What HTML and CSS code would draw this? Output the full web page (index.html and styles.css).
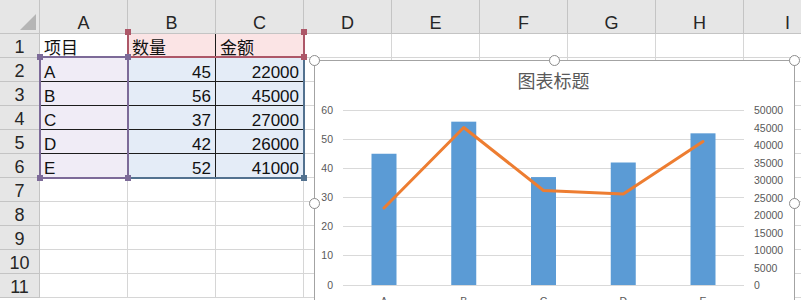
FILE: index.html
```html
<!DOCTYPE html>
<html lang="zh-CN">
<head>
    <meta charset="UTF-8">
    <meta name="viewport" content="width=device-width, initial-scale=1.0">
    <title>Sheet1 - 图表</title>
    <link rel="stylesheet" href="styles.css">
</head>
<body>

<div class="sheet">
    <div class="grid">
        <!-- column headers -->
        <div class="corner"></div>
        <div class="hd">A</div><div class="hd">B</div><div class="hd">C</div>
        <div class="hd">D</div><div class="hd">E</div><div class="hd">F</div>
        <div class="hd">G</div><div class="hd">H</div><div class="hd">I</div>

        <div class="rh">1</div>
        <div class="c t">项目</div><div class="c t nm">数量</div><div class="c t nm">金额</div>
        <div class="c"></div><div class="c"></div><div class="c"></div><div class="c"></div><div class="c"></div><div class="c"></div>

        <div class="rh">2</div>
        <div class="c t cat">A</div><div class="c t val num">45</div><div class="c t val num">22000</div>
        <div class="c"></div><div class="c"></div><div class="c"></div><div class="c"></div><div class="c"></div><div class="c"></div>

        <div class="rh">3</div>
        <div class="c t cat">B</div><div class="c t val num">56</div><div class="c t val num">45000</div>
        <div class="c"></div><div class="c"></div><div class="c"></div><div class="c"></div><div class="c"></div><div class="c"></div>

        <div class="rh">4</div>
        <div class="c t cat">C</div><div class="c t val num">37</div><div class="c t val num">27000</div>
        <div class="c"></div><div class="c"></div><div class="c"></div><div class="c"></div><div class="c"></div><div class="c"></div>

        <div class="rh">5</div>
        <div class="c t cat">D</div><div class="c t val num">42</div><div class="c t val num">26000</div>
        <div class="c"></div><div class="c"></div><div class="c"></div><div class="c"></div><div class="c"></div><div class="c"></div>

        <div class="rh">6</div>
        <div class="c t cat">E</div><div class="c t val num">52</div><div class="c t val num">41000</div>
        <div class="c"></div><div class="c"></div><div class="c"></div><div class="c"></div><div class="c"></div><div class="c"></div>

        <div class="rh">7</div>
        <div class="c"></div><div class="c"></div><div class="c"></div><div class="c"></div><div class="c"></div><div class="c"></div><div class="c"></div><div class="c"></div><div class="c"></div>
        <div class="rh">8</div>
        <div class="c"></div><div class="c"></div><div class="c"></div><div class="c"></div><div class="c"></div><div class="c"></div><div class="c"></div><div class="c"></div><div class="c"></div>
        <div class="rh">9</div>
        <div class="c"></div><div class="c"></div><div class="c"></div><div class="c"></div><div class="c"></div><div class="c"></div><div class="c"></div><div class="c"></div><div class="c"></div>
        <div class="rh">10</div>
        <div class="c"></div><div class="c"></div><div class="c"></div><div class="c"></div><div class="c"></div><div class="c"></div><div class="c"></div><div class="c"></div><div class="c"></div>
        <div class="rh">11</div>
        <div class="c"></div><div class="c"></div><div class="c"></div><div class="c"></div><div class="c"></div><div class="c"></div><div class="c"></div><div class="c"></div><div class="c"></div>
    </div>

    <!-- range finder outlines for the chart source data -->
    <div class="range range-val"><i class="tl"></i><i class="tr"></i><i class="bl"></i><i class="br"></i></div>
    <div class="range range-name"><i class="tl"></i><i class="tr"></i><i class="bl"></i><i class="br"></i></div>
    <div class="range range-cat"><i class="tl"></i><i class="tr"></i><i class="bl"></i><i class="br"></i></div>

    <!-- embedded chart -->
    <div class="chart">
        <svg class="plot" width="479" height="284" viewBox="0 0 479 284">
            <text class="title" x="238.5" y="27" text-anchor="middle">图表标题</text>

            <g class="gridlines">
                <line x1="28" y1="49.5" x2="429" y2="49.5"/>
                <line x1="28" y1="78.5" x2="429" y2="78.5"/>
                <line x1="28" y1="107.5" x2="429" y2="107.5"/>
                <line x1="28" y1="136.5" x2="429" y2="136.5"/>
                <line x1="28" y1="165.5" x2="429" y2="165.5"/>
                <line x1="28" y1="194.5" x2="429" y2="194.5"/>
                <line x1="28" y1="224.5" x2="429" y2="224.5"/>
            </g>

            <g class="axis" text-anchor="end">
                <text x="18" y="53">60</text>
                <text x="18" y="82">50</text>
                <text x="18" y="111">40</text>
                <text x="18" y="140">30</text>
                <text x="18" y="169">20</text>
                <text x="18" y="198">10</text>
                <text x="18" y="228">0</text>
            </g>

            <g class="axis">
                <text x="439" y="53">50000</text>
                <text x="439" y="70.5">45000</text>
                <text x="439" y="88">40000</text>
                <text x="439" y="105.5">35000</text>
                <text x="439" y="123">30000</text>
                <text x="439" y="140.5">25000</text>
                <text x="439" y="158">20000</text>
                <text x="439" y="175.5">15000</text>
                <text x="439" y="193">10000</text>
                <text x="439" y="210.5">5000</text>
                <text x="439" y="228">0</text>
            </g>

            <g class="bars">
                <rect x="56.5" y="92.75" width="25" height="131.25"/>
                <rect x="136.25" y="60.67" width="25" height="163.33"/>
                <rect x="216" y="116.08" width="25" height="107.92"/>
                <rect x="295.75" y="101.5" width="25" height="122.5"/>
                <rect x="375.5" y="72.33" width="25" height="151.67"/>
            </g>

            <polyline class="line" points="69,147 148.75,66.5 228.5,129.5 308.25,133 388,80.5"/>

            <g class="axis" text-anchor="middle">
                <text x="69" y="244">A</text>
                <text x="148.75" y="244">B</text>
                <text x="228.5" y="244">C</text>
                <text x="308.25" y="244">D</text>
                <text x="388" y="244">E</text>
            </g>
        </svg>
        <span class="knob k-tl"></span>
        <span class="knob k-tm"></span>
        <span class="knob k-tr"></span>
        <span class="knob k-ml"></span>
        <span class="knob k-mr"></span>
    </div>
</div>

</body>
</html>
```

FILE: styles.css
```css
body {
    margin: 0;
    background: #fff;
    font-family: "Liberation Sans", "Noto Sans CJK SC", sans-serif;
    color: #111;
    overflow: hidden;
}

.sheet {
    position: relative;
    width: 801px;
    height: 300px;
    overflow: hidden;
}

.grid {
    display: grid;
    grid-template-columns: 40px repeat(9, 88px);
    grid-template-rows: 34px repeat(11, 24px);
}

.grid > div {
    box-sizing: border-box;
    border-right: 1px solid #d6d6d6;
    border-bottom: 1px solid #d6d6d6;
    white-space: nowrap;
    overflow: hidden;
}


/* headers */
.corner,
.hd,
.rh {
    background: #e6e6e6;
    color: #262626;
    font-size: 18px;
    text-align: center;
}

.grid > .corner,
.grid > .hd,
.grid > .rh {
    border-color: #c4c4c4;
}

.corner {
    position: relative;
}

.corner::after {
    content: "";
    position: absolute;
    right: 3px;
    bottom: 3px;
    width: 16px;
    height: 16px;
    background: #b5b5b5;
    clip-path: polygon(100% 0, 100% 100%, 0 100%);
}

.hd {
    padding-top: 13px;
    line-height: 20px;
}

.rh {
    padding-top: 4px;
    line-height: 19px;
}


/* cells */
.c {
    padding: 5px 4px 0;
    font-size: 17px;
    line-height: 19px;
}

.grid > .t {
    border-right-color: #1c1c1c;
    border-bottom-color: #1c1c1c;
}

.num {
    text-align: right;
}

.cat {
    background: #f0ecf6;
}

.nm {
    background: #fbe4e5;
}

.val {
    background: #e4ecf7;
}


/* range finder */
.range {
    position: absolute;
    box-sizing: border-box;
    border: 2px solid currentColor;
}

.range i {
    position: absolute;
    width: 6px;
    height: 6px;
    background: currentColor;
}

.range .tl { left: -4px; top: -4px; }
.range .tr { right: -4px; top: -4px; }
.range .bl { left: -4px; bottom: -4px; }
.range .br { right: -4px; bottom: -4px; }

.range-val {
    left: 127px;
    top: 56px;
    width: 178px;
    height: 123px;
    color: #52718f;
}

.range-name {
    left: 127px;
    top: 33px;
    width: 178px;
    height: 25px;
    border-top: none;
    color: #ad5768;
}

.range-cat {
    left: 39px;
    top: 56px;
    width: 90px;
    height: 123px;
    color: #7c6a98;
}


/* chart */
.chart {
    position: absolute;
    left: 314px;
    top: 60px;
    width: 481px;
    height: 286px;
    box-sizing: border-box;
    border: 1px solid #a3a3a3;
    background: #fff;
}

.plot {
    display: block;
}

.title {
    font-family: "Noto Sans CJK SC", sans-serif;
    font-size: 18px;
    fill: #595959;
}

.gridlines line {
    stroke: #d9d9d9;
    stroke-width: 1;
}

.axis text {
    font-family: "Liberation Sans", sans-serif;
    font-size: 10.5px;
    fill: #595959;
}

.bars rect {
    fill: #5b9bd5;
}

.line {
    fill: none;
    stroke: #ed7d31;
    stroke-width: 3;
    stroke-linejoin: round;
    stroke-linecap: round;
}

.knob {
    position: absolute;
    width: 11px;
    height: 11px;
    box-sizing: border-box;
    border: 1.5px solid #8c8c8c;
    border-radius: 50%;
    background: #fff;
}

.k-tl { left: -6px; top: -6px; }
.k-tm { left: 234px; top: -6px; }
.k-tr { left: 474px; top: -6px; }
.k-ml { left: -6px; top: 137px; }
.k-mr { left: 474px; top: 137px; }
```
